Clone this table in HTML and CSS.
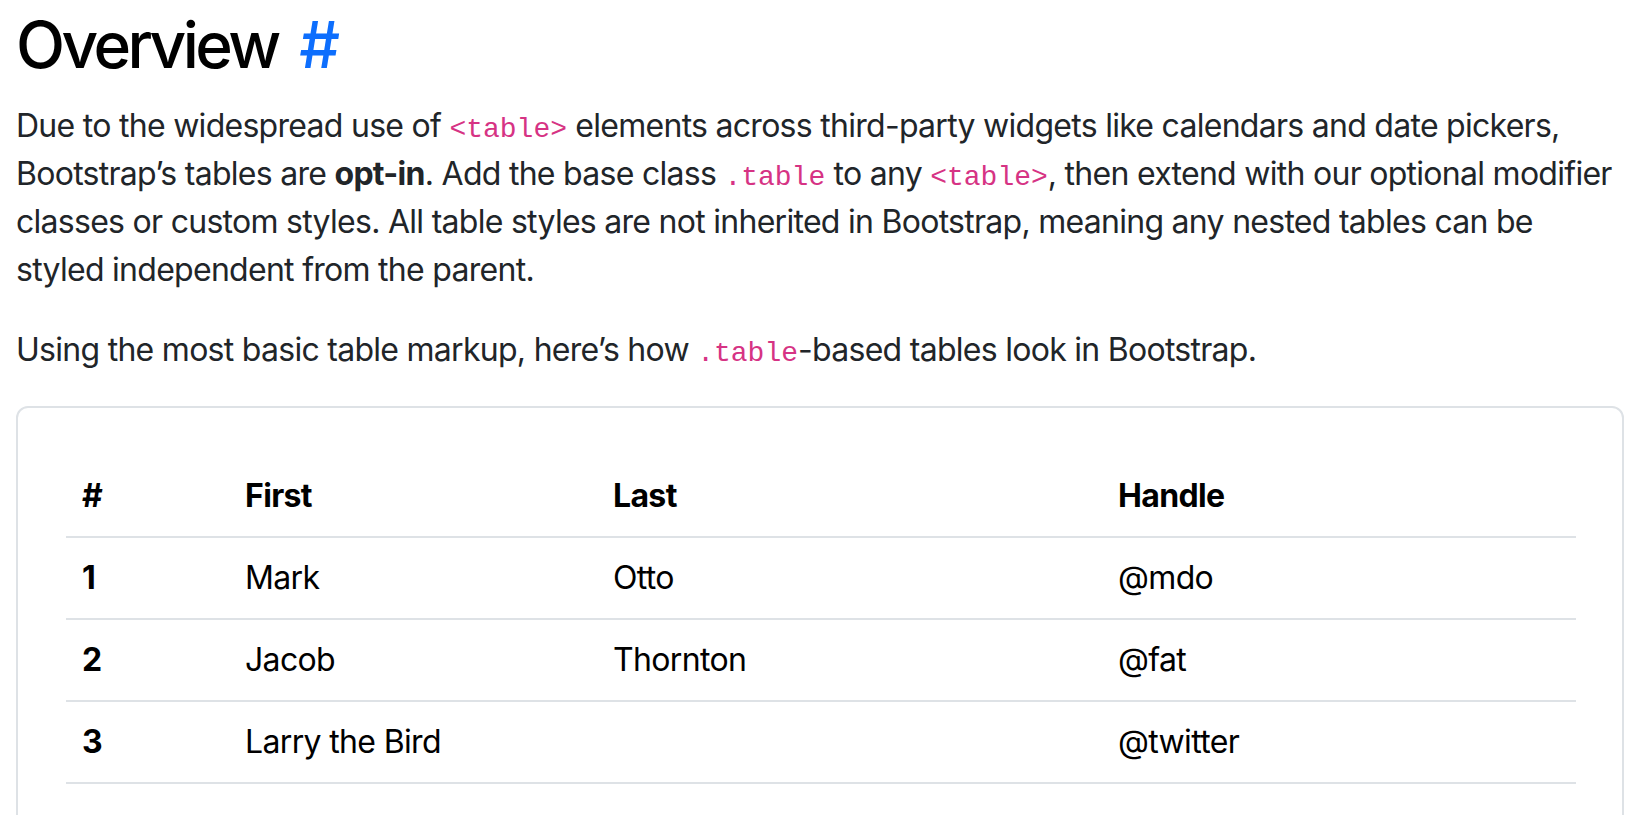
FILE: index.html
```html
<!DOCTYPE html>
<html lang="en">
<head>
<meta charset="utf-8">
<title>Tables · Bootstrap</title>
<link rel="stylesheet" href="styles.css">
</head>
<body>
<main class="content">
  <h2 class="title">Overview <a class="anchor" href="#overview">#</a></h2>
  <p class="lead-text">Due to the widespread use of <code>&lt;table&gt;</code> elements across third-party widgets like calendars and date pickers,<br>Bootstrap’s tables are <strong>opt-in</strong>. Add the base class <code>.table</code> to any <code>&lt;table&gt;</code>, then extend with our optional modifier<br>classes or custom styles. All table styles are not inherited in Bootstrap, meaning any nested tables can be<br>styled independent from the parent.</p>
  <p class="lead-text">Using the most basic table markup, here’s how <code>.table</code>-based tables look in Bootstrap.</p>
  <div class="example">
    <table class="data-table">
      <colgroup>
        <col class="col-num">
        <col class="col-first">
        <col class="col-last">
        <col class="col-handle">
      </colgroup>
      <thead>
        <tr><th>#</th><th>First</th><th>Last</th><th>Handle</th></tr>
      </thead>
      <tbody>
        <tr><th>1</th><td>Mark</td><td>Otto</td><td>@mdo</td></tr>
        <tr><th>2</th><td>Jacob</td><td>Thornton</td><td>@fat</td></tr>
        <tr><th>3</th><td>Larry the Bird</td><td></td><td>@twitter</td></tr>
      </tbody>
    </table>
  </div>
</main>
</body>
</html>
```
FILE: styles.css
```css
html, body {
  margin: 0;
  padding: 0;
  background: #fff;
}
body {
  font-family: Inter, "Liberation Sans", Arial, sans-serif;
  color: #212529;
  overflow: hidden;
}
.content {
  width: 1608px;
  padding: 0 0 0 16px;
}
.title {
  margin: 4px 0 16px 0;
  font-size: 64px;
  line-height: 82px;
  font-weight: 500;
  letter-spacing: -3.6px;
  color: #000;
  white-space: nowrap;
}
.anchor {
  color: #0d6efd;
  text-decoration: none;
  padding-left: 8px;
  letter-spacing: 0;
}
.lead-text {
  margin: 0 0 32px 0;
  font-size: 32px;
  line-height: 48px;
  letter-spacing: -0.72px;
  white-space: nowrap;
}
.lead-text strong {
  font-weight: 700;
  color: #212529;
}
code {
  font-family: "Liberation Mono", "DejaVu Sans Mono", monospace;
  font-size: 28px;
  line-height: 1;
  letter-spacing: 0;
  color: #d63384;
}
.example {
  border: 2px solid #dee2e6;
  border-radius: 12px;
  padding: 48px 46px 48px 48px;
}
.data-table {
  width: 100%;
  border-collapse: collapse;
  color: #000;
  font-size: 32px;
  line-height: 48px;
  letter-spacing: -0.65px;
}
.col-num { width: 163px; }
.col-first { width: 368px; }
.col-last { width: 505px; }
.col-handle { width: auto; }
.data-table th,
.data-table td {
  padding: 16px;
  text-align: left;
  vertical-align: top;
  border-bottom: 2px solid #dee2e6;
}
.data-table th {
  font-weight: 700;
}
.data-table td {
  font-weight: 400;
}
```
